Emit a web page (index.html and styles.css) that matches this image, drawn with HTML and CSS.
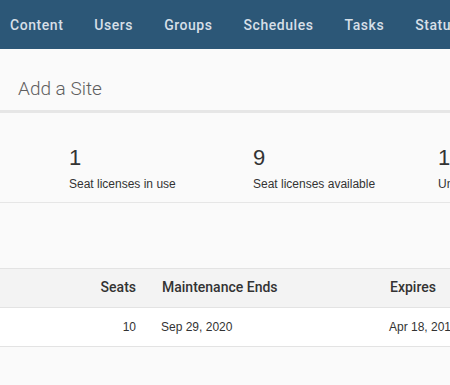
FILE: index.html
```html
<!DOCTYPE html>
<html lang="en">
<head>
    <meta charset="UTF-8">
    <meta name="viewport" content="width=device-width, initial-scale=1.0">
    <title>Sites</title>
    <link rel="stylesheet" href="styles.css">
</head>
<body>
    <nav class="topnav">
        <a href="#">Content</a>
        <a href="#">Users</a>
        <a href="#">Groups</a>
        <a href="#">Schedules</a>
        <a href="#">Tasks</a>
        <a href="#">Status</a>
        <a href="#">Settings</a>
    </nav>

    <div class="page-head">
        <h1>Add a Site</h1>
    </div>

    <div class="stats">
        <div class="stat">
            <div class="stat-value">1</div>
            <div class="stat-label">Seat licenses in use</div>
        </div>
        <div class="stat">
            <div class="stat-value">9</div>
            <div class="stat-label">Seat licenses available</div>
        </div>
        <div class="stat">
            <div class="stat-value">1</div>
            <div class="stat-label">Unlicensed users</div>
        </div>
    </div>

    <div class="licenses">
        <table>
            <thead>
                <tr>
                    <th class="col-key"></th>
                    <th class="col-seats">Seats</th>
                    <th class="col-maint">Maintenance Ends</th>
                    <th class="col-exp">Expires</th>
                </tr>
            </thead>
            <tbody>
                <tr>
                    <td class="col-key"></td>
                    <td class="col-seats">10</td>
                    <td class="col-maint">Sep 29, 2020</td>
                    <td class="col-exp">Apr 18, 2019</td>
                </tr>
            </tbody>
        </table>
    </div>
</body>
</html>
```

FILE: styles.css
```css
html, body {
    margin: 0;
    padding: 0;
    overflow: hidden;
}
body {
    font-family: "Liberation Sans", Arial, sans-serif;
    background-color: #fafafa;
    color: #333;
}
.topnav {
    display: flex;
    gap: 31px;
    height: 49px;
    align-items: center;
    padding-left: 10px;
    background-color: #2c5777;
    white-space: nowrap;
    overflow: hidden;
}
.topnav a {
    color: #d6dfe7;
    text-decoration: none;
    font-family: Roboto, "Liberation Sans", sans-serif;
    font-weight: 500;
    font-size: 14px;
    letter-spacing: 0.55px;
    padding-top: 1px;
}
.page-head {
    height: 61px;
    padding-left: 18px;
    border-bottom: 3px solid #e6e6e6;
    display: flex;
    align-items: center;
}
.page-head h1 {
    margin: 0;
    font-family: Roboto, "Liberation Sans", sans-serif;
    font-weight: 300;
    font-size: 19px;
    color: #5f5f5f;
    padding-top: 18px;
}
.stats {
    display: grid;
    grid-template-columns: 184px 185px 184px;
    padding-left: 69px;
    height: 89px;
    align-content: center;
    border-bottom: 1px solid #e6e6e6;
    white-space: nowrap;
}
.stat-value {
    font-size: 22px;
    line-height: 26px;
    color: #333;
    padding-top: 21px;
}
.stat-label {
    font-size: 12px;
    line-height: 16px;
    margin-top: 5px;
    color: #333;
}
.licenses {
    margin-top: 65px;
}
table {
    border-collapse: collapse;
    table-layout: fixed;
    width: 700px;
    border-top: 1px solid #e3e3e3;
}
th, td {
    height: 38px;
    padding: 0;
    white-space: nowrap;
    text-align: left;
}
th {
    height: 36px;
    background-color: #f3f3f3;
    font-family: Roboto, "Liberation Sans", sans-serif;
    font-weight: 500;
    font-size: 14px;
    color: #333;
    border-bottom: 1px solid #e3e3e3;
    padding-bottom: 2px;
}
td {
    background-color: #fff;
    font-size: 12px;
    color: #333;
    border-bottom: 1px solid #e3e3e3;
}
.col-key {
    width: 80px;
}
.col-seats {
    width: 56px;
    padding-right: 14px;
    text-align: right;
}
.col-maint {
    width: 218px;
    padding-left: 12px;
}
.col-exp {
    padding-left: 10px;
}
td.col-maint {
    padding-left: 11px;
}
td.col-exp {
    padding-left: 9px;
}
```
